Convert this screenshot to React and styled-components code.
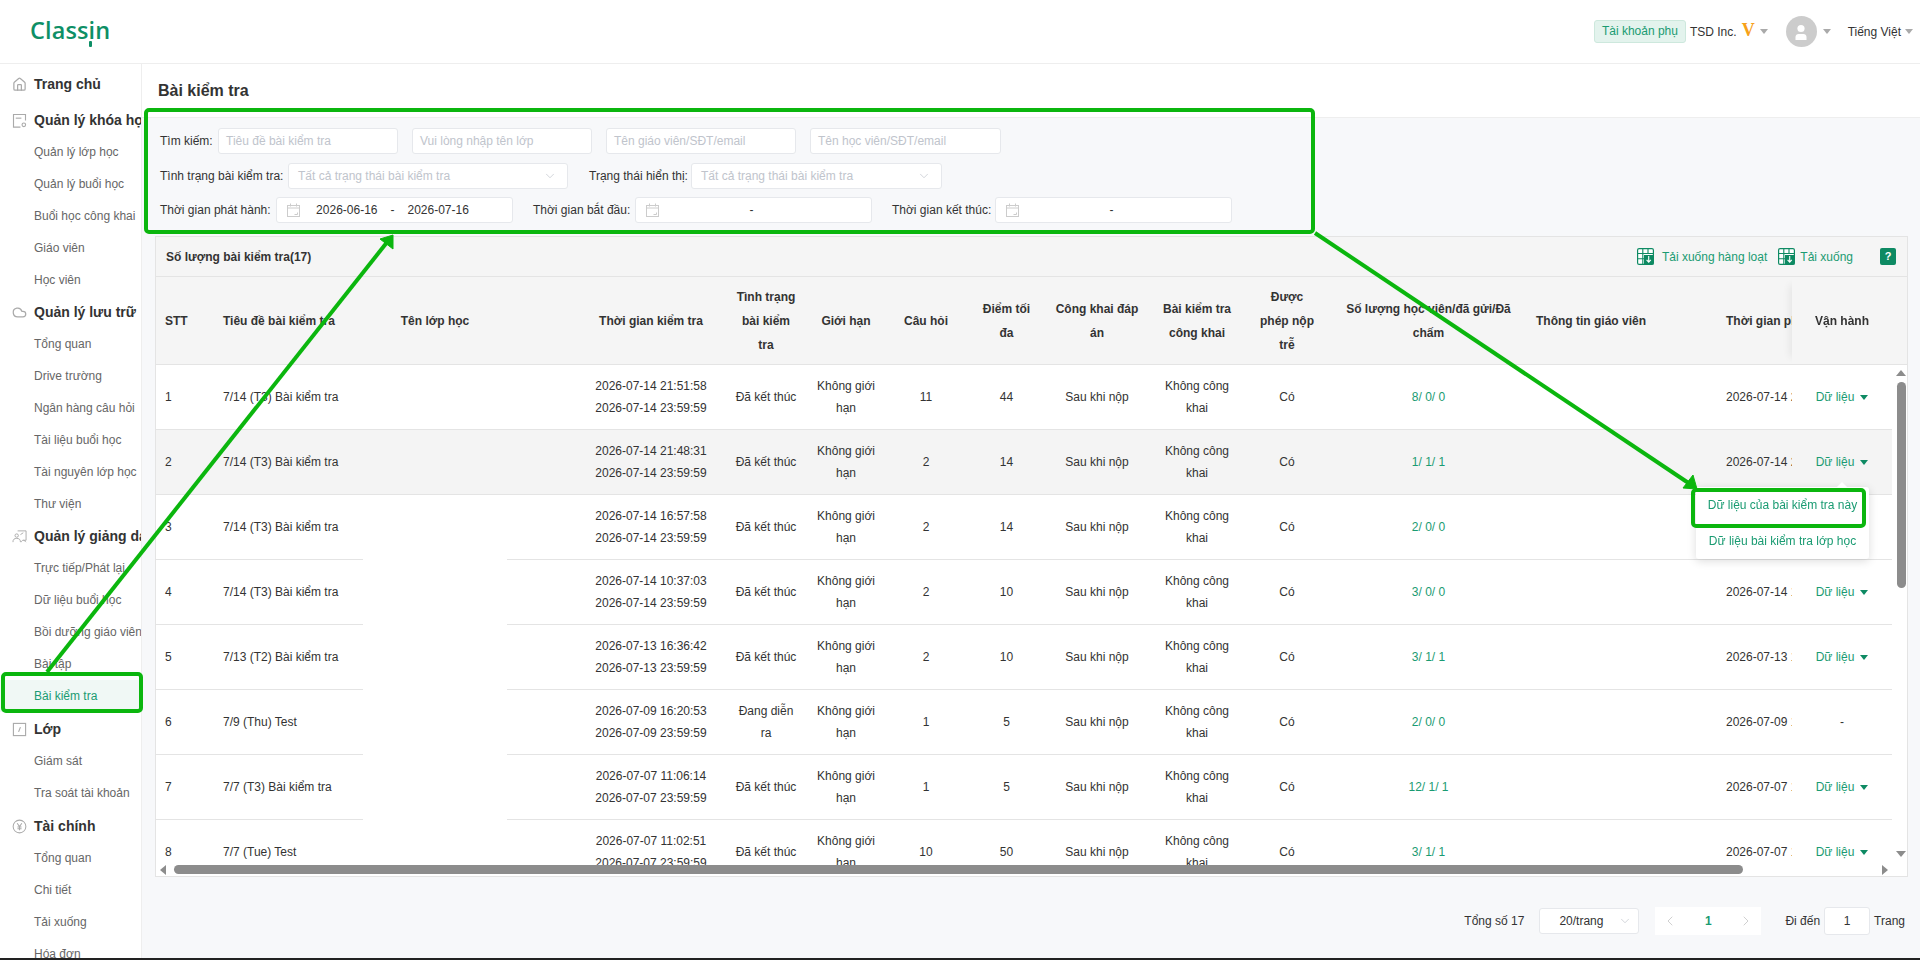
import React from "react";
import styled, { createGlobalStyle } from "styled-components";
import { Home, Cloud, ChevronDown, ChevronLeft, ChevronRight } from "lucide-react";

const GREEN = "#1a9b72";
const DARK_GREEN = "#0e8a63";

const GlobalStyle = createGlobalStyle`
  * { box-sizing: border-box; }
  html, body { margin: 0; padding: 0; overflow: hidden; }
  body {
    font-family: "Liberation Sans", Arial, sans-serif;
    font-size: 12px;
    color: #333;
    background: #fff;
  }
`;

const Page = styled.div`
  position: relative;
  width: 1920px;
  height: 960px;
  display: flex;
  flex-direction: column;
  overflow: hidden;
`;

const TopBar = styled.header`
  height: 64px;
  flex: none;
  display: flex;
  align-items: center;
  justify-content: space-between;
  padding: 0 7px 0 30px;
  border-bottom: 1px solid #eee;
  background: #fff;
`;

const Logo = styled.div`
  font-family: "Open Sans", Lato, sans-serif;
  font-size: 23.5px;
  font-weight: 600;
  letter-spacing: 0.1px;
  color: #0e8f66;
  margin-top: -3px;
  span {
    position: relative;
  }
  span::after {
    content: "";
    position: absolute;
    left: 1px;
    bottom: -1px;
    width: 3px;
    height: 6px;
    background: #0e8f66;
    border-radius: 1px;
  }
`;

const TopRight = styled.div`
  display: flex;
  align-items: center;
`;

const Badge = styled.div`
  width: 92px;
  height: 23px;
  line-height: 21px;
  text-align: center;
  background: #e3f3ed;
  border: 1px solid #cde8dd;
  border-radius: 3px;
  color: ${GREEN};
  margin-right: 4px;
`;

const VipMark = styled.span`
  font-family: "Liberation Serif", serif;
  font-weight: 700;
  font-size: 18px;
  color: #f7a11a;
  margin: -3px 5px 0 5px;
`;

const Caret = styled.i`
  display: inline-block;
  flex: none;
  width: 0;
  height: 0;
  border-left: 4px solid transparent;
  border-right: 4px solid transparent;
  border-top: 5px solid ${(p) => p.$color || "#aaa"};
  margin-left: ${(p) => p.$left || 0}px;
  margin-right: ${(p) => p.$right || 0}px;
`;

const Avatar = styled.div`
  width: 31px;
  height: 31px;
  border-radius: 50%;
  background: #ccc;
  margin-left: 18px;
  display: flex;
  align-items: center;
  justify-content: center;
`;

const Body = styled.div`
  flex: 1;
  min-height: 0;
  display: flex;
`;

const Sidebar = styled.nav`
  width: 142px;
  flex: none;
  background: #fff;
  border-right: 1px solid #eee;
  overflow: hidden;
  padding-top: 4px;
  white-space: nowrap;
`;

const GroupRow = styled.div`
  height: 32px;
  display: flex;
  align-items: center;
  padding-left: 12px;
  margin-top: ${(p) => p.$top || 0}px;
  font-size: 14px;
  font-weight: 700;
  color: #333;
  svg {
    flex: none;
    width: 15px;
    height: 15px;
    margin-right: 7px;
    color: #aaa;
  }
`;

const NavItem = styled.div`
  height: 32px;
  line-height: 32px;
  padding-left: 34px;
  color: ${(p) => (p.$active ? GREEN : "#666")};
  background: ${(p) => (p.$active ? "#f0f8f5" : "transparent")};
`;

const Main = styled.main`
  flex: 1;
  min-width: 0;
  background: #f7f8fa;
  display: flex;
  flex-direction: column;
`;

const TitleBar = styled.div`
  height: 54px;
  flex: none;
  display: flex;
  align-items: center;
  padding-left: 16px;
  background: #fff;
  border-bottom: 1px solid #eee;
  font-size: 16px;
  font-weight: 700;
  color: #333;
`;

const Filters = styled.section`
  height: 118px;
  flex: none;
  padding: 10px 0 0 18px;
  display: flex;
  flex-direction: column;
  gap: 8.5px;
`;

const FilterRow = styled.div`
  display: flex;
  align-items: center;
  height: 26px;
`;

const FieldLabel = styled.label`
  width: ${(p) => p.$w}px;
  flex: none;
  margin-left: ${(p) => p.$left || 0}px;
  color: #333;
  white-space: nowrap;
`;

const TextBox = styled.div`
  width: ${(p) => p.$w}px;
  height: 26px;
  flex: none;
  margin-right: ${(p) => p.$right || 0}px;
  padding: 0 8px 0 7px;
  line-height: 24px;
  background: #fff;
  border: 1px solid #e6e8ec;
  border-radius: 3px;
  color: #c0c4cc;
  white-space: nowrap;
  overflow: hidden;
`;

const SelectBox = styled(TextBox)`
  display: flex;
  align-items: center;
  justify-content: space-between;
  padding-left: 9px;
  padding-right: 10px;
  svg {
    color: #c0c4cc;
  }
`;

const RangeBox = styled.div`
  width: 237px;
  height: 26px;
  flex: none;
  display: grid;
  grid-template-columns: 1fr auto 1fr;
  column-gap: 13px;
  align-items: center;
  background: #fff;
  border: 1px solid #e6e8ec;
  border-radius: 3px;
  color: #333;
  padding-right: 4px;
`;

const RangeStart = styled.div`
  display: flex;
  align-items: center;
  justify-content: space-between;
  padding-left: 10px;
`;

const Panel = styled.section`
  height: 641px;
  flex: none;
  margin: 0 12px 0 13px;
  border: 1px solid #e4e4e4;
  background: #fff;
  display: flex;
  flex-direction: column;
`;

const Toolbar = styled.div`
  height: 40px;
  flex: none;
  display: flex;
  align-items: center;
  padding: 0 11px 0 10px;
  background: #f5f5f5;
  border-bottom: 1px solid #e4e4e4;
  font-weight: 700;
  white-space: nowrap;
`;

const ToolLink = styled.a`
  display: flex;
  align-items: center;
  color: ${GREEN};
  font-weight: 400;
  margin-left: ${(p) => (p.$push ? "auto" : `${p.$left || 0}px`)};
  svg {
    margin-right: ${(p) => p.$gap}px;
  }
`;

const HelpButton = styled.div`
  width: 16px;
  height: 17px;
  margin-left: 27px;
  border-radius: 2px;
  background: ${DARK_GREEN};
  color: #fff;
  font-size: 11px;
  font-weight: 700;
  line-height: 17px;
  text-align: center;
`;

const TableRow = styled.div`
  flex: 1;
  min-height: 0;
  display: flex;
`;

const Viewport = styled.div`
  width: 1736px;
  flex: none;
  overflow: hidden;
`;

const Table = styled.table`
  table-layout: fixed;
  width: 1830px;
  border-collapse: separate;
  border-spacing: 0;
`;

const Th = styled.th`
  height: 88px;
  padding: 0 ${(p) => (p.$tight ? 6 : 10)}px 0 ${(p) => p.$left ?? (p.$tight ? 6 : 10)}px;
  background: #f5f5f5;
  border-bottom: 1px solid #e4e4e4;
  font-size: 12px;
  font-weight: 700;
  line-height: 24px;
  color: #333;
  text-align: ${(p) => p.$align || "center"};
  overflow: hidden;
  white-space: ${(p) => (p.$nowrap ? "nowrap" : "normal")};
  ${(p) =>
    p.$fixed &&
    `position: sticky; right: 0; z-index: 2; box-shadow: -10px 0 8px -8px rgba(0,0,0,0.07);`}
`;

const Td = styled.td`
  height: 65px;
  padding: 0 ${(p) => (p.$tight ? 8 : 10)}px 0 ${(p) => p.$left ?? (p.$tight ? 8 : 10)}px;
  background: ${(p) => (p.$hover ? "#f4f4f4" : "#fff")};
  border-bottom: 1px solid ${(p) => (p.$noLine ? "#fff" : "#e4e4e4")};
  font-size: 12px;
  line-height: 22px;
  color: #333;
  text-align: ${(p) => p.$align || "center"};
  overflow: hidden;
  white-space: ${(p) => (p.$nowrap ? "nowrap" : "normal")};
  ${(p) => p.$fixed && `position: sticky; right: 0; z-index: 2;`}
`;

const CountText = styled.span`
  color: ${GREEN};
`;

const ActionLink = styled.span`
  color: ${GREEN};
  display: inline-flex;
  align-items: center;
`;

const Gutter = styled.div`
  flex: 1;
  display: flex;
  flex-direction: column;
`;

const GutterHead = styled.div`
  height: 88px;
  flex: none;
  background: #f5f5f5;
  border-bottom: 1px solid #e4e4e4;
`;

const GutterTrack = styled.div`
  flex: 1;
  display: flex;
  flex-direction: column;
  align-items: center;
  padding: 5px 0 8px 3px;
`;

const ArrowUp = styled.i`
  width: 0;
  height: 0;
  border-left: 5px solid transparent;
  border-right: 5px solid transparent;
  border-bottom: 6px solid #8c8c8c;
`;

const ArrowDown = styled.i`
  width: 0;
  height: 0;
  margin-top: auto;
  border-left: 5px solid transparent;
  border-right: 5px solid transparent;
  border-top: 6px solid #8c8c8c;
`;

const VThumb = styled.div`
  width: 9px;
  height: 206px;
  margin-top: 6px;
  border-radius: 5px;
  background: #8c8c8c;
`;

const HBar = styled.div`
  height: 11px;
  flex: none;
  display: flex;
  align-items: flex-start;
`;

const ArrowLeft = styled.i`
  width: 0;
  height: 0;
  margin: 0 0 0 4px;
  border-top: 5px solid transparent;
  border-bottom: 5px solid transparent;
  border-right: 6px solid #8c8c8c;
`;

const ArrowRight = styled.i`
  width: 0;
  height: 0;
  margin: 0 19px 0 auto;
  border-top: 5px solid transparent;
  border-bottom: 5px solid transparent;
  border-left: 6px solid #8c8c8c;
`;

const HThumb = styled.div`
  width: 1569px;
  height: 9px;
  margin-left: 8px;
  border-radius: 5px;
  background: #8c8c8c;
`;

const Pager = styled.div`
  height: 28px;
  margin-top: 30px;
  flex: none;
  display: flex;
  align-items: center;
  justify-content: flex-end;
  padding-right: 15px;
  color: #333;
`;

const PageSize = styled.div`
  width: 100px;
  height: 26px;
  margin: 0 16px 0 15px;
  display: flex;
  align-items: center;
  justify-content: space-between;
  padding: 0 6px 0 19px;
  background: #fff;
  border: 1px solid #e6e8ec;
  border-radius: 3px;
  svg {
    color: #c0c4cc;
  }
`;

const PageNums = styled.div`
  width: 106px;
  height: 28px;
  margin-right: 24px;
  display: flex;
  align-items: center;
  justify-content: space-between;
  padding: 0 7px;
  background: #fff;
  font-weight: 700;
  color: ${GREEN};
  svg {
    color: #ccc;
  }
`;

const JumpBox = styled.div`
  width: 46px;
  height: 28px;
  margin: 0 4px;
  line-height: 26px;
  text-align: center;
  background: #fff;
  border: 1px solid #e6e8ec;
  border-radius: 3px;
`;

const BottomLine = styled.div`
  height: 2px;
  flex: none;
  background: #222;
`;

const Menu = styled.div`
  position: absolute;
  z-index: 5;
  left: 1696px;
  top: 487px;
  width: 173px;
  height: 72px;
  background: #fff;
  border-radius: 3px;
  box-shadow: 0 2px 10px rgba(0, 0, 0, 0.14);
  &::before {
    content: "";
    position: absolute;
    top: -5px;
    left: 140px;
    border-left: 6px solid transparent;
    border-right: 6px solid transparent;
    border-bottom: 6px solid #fff;
  }
`;

const MenuItem = styled.div`
  height: 36px;
  line-height: 36px;
  text-align: center;
  color: ${GREEN};
  white-space: nowrap;
`;

const Annotations = styled.svg`
  position: absolute;
  z-index: 10;
  left: 0;
  top: 0;
  pointer-events: none;
`;

function ManageIcon() {
  return (
    <svg viewBox="0 0 16 16" fill="none" stroke="currentColor" strokeWidth="1.2">
      <path d="M9 15H1.6V1.6h12.8V8" />
      <path d="M4 5.5h6" />
      <circle cx="12.6" cy="12.6" r="1.9" />
    </svg>
  );
}

function TeachIcon() {
  return (
    <svg viewBox="0 0 16 16" fill="none" stroke="currentColor" strokeWidth="1">
      <path d="M6 2h9v10h-3" />
      <circle cx="5" cy="7" r="1.8" />
      <path d="M1 14c0-3 1.5-4 4-4s4 1 4 4" />
      <path d="M9 6l3-2M10 14c0-1 1-2 2-2s2 1 3 2" />
    </svg>
  );
}

function ClassIcon() {
  return (
    <svg viewBox="0 0 16 16" fill="none" stroke="currentColor" strokeWidth="1.2">
      <rect x="1.5" y="1.5" width="13" height="13" />
      <path d="M9 5.5L7 10.5" />
    </svg>
  );
}

function MoneyIcon() {
  return (
    <svg viewBox="0 0 16 16" fill="none" stroke="currentColor" strokeWidth="1.1">
      <circle cx="8" cy="8" r="6.8" />
      <path d="M5.5 4.5L8 8l2.5-3.5M8 8v4M5.8 8.5h4.4M5.8 10.4h4.4" />
    </svg>
  );
}

function CalendarIcon() {
  return (
    <svg width="13" height="14" viewBox="0 0 13 14" fill="none" stroke="#ccc" strokeWidth="1">
      <rect x="0.5" y="2.5" width="12" height="11" />
      <path d="M3.5 0.5v3M9.5 0.5v3M0.5 5h12" />
      <path d="M7.5 11.5h3v-2" />
    </svg>
  );
}

function SheetIcon() {
  return (
    <svg width="17" height="17" viewBox="0 0 17 17">
      <rect x="0.6" y="0.6" width="15.8" height="15.8" rx="1.5" fill="#fff" stroke={DARK_GREEN} strokeWidth="1.2" />
      <path d="M0.6 5.5h15.8M0.6 10.7h6.500M5.8 0.6v15.800M11 0.6v5" stroke={DARK_GREEN} strokeWidth="1.1" fill="none" />
      <rect x="7" y="7" width="9.5" height="9.5" fill={DARK_GREEN} />
      <path d="M11.7 8v6M9.6 11.8l2.1 2.4 2.1-2.4" stroke="#fff" strokeWidth="1.1" fill="none" />
    </svg>
  );
}

function UserGlyph() {
  return (
    <svg width="14" height="16" viewBox="0 0 14 16" fill="#fff">
      <circle cx="7" cy="4.5" r="3.6" />
      <path d="M1.5 16v-3c0-2 1.5-3 3-3h5c1.5 0 3 1 3 3v3z" />
    </svg>
  );
}

const columns = [
  { title: "STT", w: 51, align: "left", left: 9 },
  { title: "Tiêu đề bài kiểm tra", w: 156, align: "left", left: 16, nowrap: true },
  { title: "Tên lớp học", w: 144 },
  { title: "Thời gian kiểm tra", w: 219, left: 79, nowrap: true },
  { title: "Tình trạng bài kiểm tra", w: 80 },
  { title: "Giới hạn", w: 80, tight: true },
  { title: "Câu hỏi", w: 80 },
  { title: "Điểm tối đa", w: 81 },
  { title: "Công khai đáp án", w: 100, tight: true },
  { title: "Bài kiểm tra công khai", w: 100 },
  { title: "Được phép nộp trễ", w: 80 },
  { title: "Số lượng học viên/đã gửi/Đã chấm", w: 203 },
  { title: "Thông tin giáo viên", w: 186, align: "left", left: 6, nowrap: true },
  { title: "Thời gian phát hành", w: 170, align: "left", left: 10, nowrap: true },
  { title: "Vận hành", w: 100, fixed: true },
];

const rows = [
  { name: "7/14 (T3) Bài kiểm tra", start: "2026-07-14 21:51:58", end: "2026-07-14 23:59:59", status: "Đã kết thúc", q: 11, score: 44, count: "8/ 0/ 0", pub: "2026-07-14 21:51:58" },
  { name: "7/14 (T3) Bài kiểm tra", start: "2026-07-14 21:48:31", end: "2026-07-14 23:59:59", status: "Đã kết thúc", q: 2, score: 14, count: "1/ 1/ 1", pub: "2026-07-14 21:48:31", hover: true },
  { name: "7/14 (T3) Bài kiểm tra", start: "2026-07-14 16:57:58", end: "2026-07-14 23:59:59", status: "Đã kết thúc", q: 2, score: 14, count: "2/ 0/ 0", pub: "2026-07-14 16:57:58" },
  { name: "7/14 (T3) Bài kiểm tra", start: "2026-07-14 10:37:03", end: "2026-07-14 23:59:59", status: "Đã kết thúc", q: 2, score: 10, count: "3/ 0/ 0", pub: "2026-07-14 10:37:03" },
  { name: "7/13 (T2) Bài kiểm tra", start: "2026-07-13 16:36:42", end: "2026-07-13 23:59:59", status: "Đã kết thúc", q: 2, score: 10, count: "3/ 1/ 1", pub: "2026-07-13 16:36:42" },
  { name: "7/9 (Thu) Test", start: "2026-07-09 16:20:53", end: "2026-07-09 23:59:59", status: "Đang diễn ra", q: 1, score: 5, count: "2/ 0/ 0", pub: "2026-07-09 16:20:53", noAction: true },
  { name: "7/7 (T3) Bài kiểm tra", start: "2026-07-07 11:06:14", end: "2026-07-07 23:59:59", status: "Đã kết thúc", q: 1, score: 5, count: "12/ 1/ 1", pub: "2026-07-07 11:06:14" },
  { name: "7/7 (Tue) Test", start: "2026-07-07 11:02:51", end: "2026-07-07 23:59:59", status: "Đã kết thúc", q: 10, score: 50, count: "3/ 1/ 1", pub: "2026-07-07 11:02:51" },
];

const navigation = [
  { icon: <Home />, label: "Trang chủ", items: [] },
  { icon: <ManageIcon />, label: "Quản lý khóa học", top: 4, items: ["Quản lý lớp học", "Quản lý buổi học", "Buổi học công khai", "Giáo viên", "Học viên"] },
  { icon: <Cloud />, label: "Quản lý lưu trữ", items: ["Tổng quan", "Drive trường", "Ngân hàng câu hỏi", "Tài liệu buổi học", "Tài nguyên lớp học", "Thư viện"] },
  { icon: <TeachIcon />, label: "Quản lý giảng dạy", items: ["Trực tiếp/Phát lại", "Dữ liệu buổi học", "Bồi dưỡng giáo viên", "Bài tập", "Bài kiểm tra"] },
  { icon: <ClassIcon />, label: "Lớp", top: 1, items: ["Giám sát", "Tra soát tài khoản"] },
  { icon: <MoneyIcon />, label: "Tài chính", top: 1, items: ["Tổng quan", "Chi tiết", "Tải xuống", "Hóa đơn"] },
];

function DateRange({ from, to }) {
  return (
    <RangeBox>
      <RangeStart>
        <CalendarIcon />
        <span>{from}</span>
      </RangeStart>
      <span>-</span>
      <span>{to}</span>
    </RangeBox>
  );
}

function renderRow(row, i) {
  return (
    <tr key={i}>
      <Td $hover={row.hover} $align="left" $left={9}>{i + 1}</Td>
      <Td $hover={row.hover} $align="left" $left={16} $nowrap>{row.name}</Td>
      <Td $hover={row.hover} $noLine={i > 1} />
      <Td $hover={row.hover} $left={79} $nowrap>
        {row.start}
        <br />
        {row.end}
      </Td>
      <Td $hover={row.hover} $tight>{row.status}</Td>
      <Td $hover={row.hover} $tight>Không giới hạn</Td>
      <Td $hover={row.hover}>{row.q}</Td>
      <Td $hover={row.hover}>{row.score}</Td>
      <Td $hover={row.hover}>Sau khi nộp</Td>
      <Td $hover={row.hover}>Không công khai</Td>
      <Td $hover={row.hover}>Có</Td>
      <Td $hover={row.hover}><CountText>{row.count}</CountText></Td>
      <Td $hover={row.hover} />
      <Td $hover={row.hover} $align="left" $nowrap>{row.pub}</Td>
      <Td $hover={row.hover} $fixed>
        {row.noAction ? "-" : (
          <ActionLink>
            Dữ liệu
            <Caret $color={DARK_GREEN} $left={6} />
          </ActionLink>
        )}
      </Td>
    </tr>
  );
}

export default function App() {
  return (
    <Page>
      <GlobalStyle />
      <TopBar>
        <Logo>Class<span>i</span>n</Logo>
        <TopRight>
          <Badge>Tài khoản phụ</Badge>
          <span>TSD Inc.</span>
          <VipMark>V</VipMark>
          <Caret />
          <Avatar>
            <UserGlyph />
          </Avatar>
          <Caret $left={6} $right={17} />
          <span>Tiếng Việt</span>
          <Caret $left={4} />
        </TopRight>
      </TopBar>

      <Body>
        <Sidebar>
          {navigation.map((group) => (
            <React.Fragment key={group.label}>
              <GroupRow $top={group.top}>
                {group.icon}
                {group.label}
              </GroupRow>
              {group.items.map((item) => (
                <NavItem key={item} $active={item === "Bài kiểm tra"}>{item}</NavItem>
              ))}
            </React.Fragment>
          ))}
        </Sidebar>

        <Main>
          <TitleBar>Bài kiểm tra</TitleBar>

          <Filters>
            <FilterRow>
              <FieldLabel $w={58}>Tìm kiếm:</FieldLabel>
              <TextBox $w={180} $right={14}>Tiêu đề bài kiểm tra</TextBox>
              <TextBox $w={180} $right={14}>Vui lòng nhập tên lớp</TextBox>
              <TextBox $w={190} $right={14}>Tên giáo viên/SĐT/email</TextBox>
              <TextBox $w={191}>Tên học viên/SĐT/email</TextBox>
            </FilterRow>
            <FilterRow>
              <FieldLabel $w={128}>Tình trạng bài kiểm tra:</FieldLabel>
              <SelectBox $w={280}>
                Tất cả trạng thái bài kiểm tra
                <ChevronDown size={14} strokeWidth={1.2} />
              </SelectBox>
              <FieldLabel $w={102} $left={21}>Trạng thái hiển thị:</FieldLabel>
              <SelectBox $w={251}>
                Tất cả trạng thái bài kiểm tra
                <ChevronDown size={14} strokeWidth={1.2} />
              </SelectBox>
            </FilterRow>
            <FilterRow>
              <FieldLabel $w={116}>Thời gian phát hành:</FieldLabel>
              <DateRange from="2026-06-16" to="2026-07-16" />
              <FieldLabel $w={102} $left={20}>Thời gian bắt đầu:</FieldLabel>
              <DateRange />
              <FieldLabel $w={103} $left={20}>Thời gian kết thúc:</FieldLabel>
              <DateRange />
            </FilterRow>
          </Filters>

          <Panel>
            <Toolbar>
              <span>Số lượng bài kiểm tra(17)</span>
              <ToolLink $push $gap={8}>
                <SheetIcon />
                Tải xuống hàng loạt
              </ToolLink>
              <ToolLink $left={11} $gap={5}>
                <SheetIcon />
                Tải xuống
              </ToolLink>
              <HelpButton>?</HelpButton>
            </Toolbar>

            <TableRow>
              <Viewport>
                <Table>
                  <colgroup>
                    {columns.map((col) => (
                      <col key={col.title} style={{ width: col.w }} />
                    ))}
                  </colgroup>
                  <thead>
                    <tr>
                      {columns.map((col) => (
                        <Th
                          key={col.title}
                          $align={col.align}
                          $left={col.left}
                          $tight={col.tight}
                          $nowrap={col.nowrap}
                          $fixed={col.fixed}
                        >
                          {col.title}
                        </Th>
                      ))}
                    </tr>
                  </thead>
                  <tbody>{rows.map(renderRow)}</tbody>
                </Table>
              </Viewport>
              <Gutter>
                <GutterHead />
                <GutterTrack>
                  <ArrowUp />
                  <VThumb />
                  <ArrowDown />
                </GutterTrack>
              </Gutter>
            </TableRow>

            <HBar>
              <ArrowLeft />
              <HThumb />
              <ArrowRight />
            </HBar>
          </Panel>

          <Pager>
            <span>Tổng số 17</span>
            <PageSize>
              20/trang
              <ChevronDown size={14} strokeWidth={1.2} />
            </PageSize>
            <PageNums>
              <ChevronLeft size={16} strokeWidth={1.4} />
              1
              <ChevronRight size={16} strokeWidth={1.4} />
            </PageNums>
            <span>Đi đến</span>
            <JumpBox>1</JumpBox>
            <span>Trang</span>
          </Pager>
        </Main>
      </Body>

      <BottomLine />

      <Menu>
        <MenuItem>Dữ liệu của bài kiểm tra này</MenuItem>
        <MenuItem>Dữ liệu bài kiểm tra lớp học</MenuItem>
      </Menu>

      <Annotations width="1920" height="960" viewBox="0 0 1920 960" fill="none" stroke="#0bb60e" strokeWidth="4">
        <rect x="146" y="110" width="1167" height="122" rx="3" />
        <rect x="3" y="674" width="138" height="37" rx="3" />
        <rect x="1693" y="490" width="171" height="36" rx="3" />
        <path d="M47 672L388 241" />
        <path d="M1315 233L1690 484" />
        <path d="M393 235L380 239L393 249Z" fill="#0bb60e" strokeWidth="1" />
        <path d="M1697 489L1683 488L1693 475Z" fill="#0bb60e" strokeWidth="1" />
      </Annotations>
    </Page>
  );
}
